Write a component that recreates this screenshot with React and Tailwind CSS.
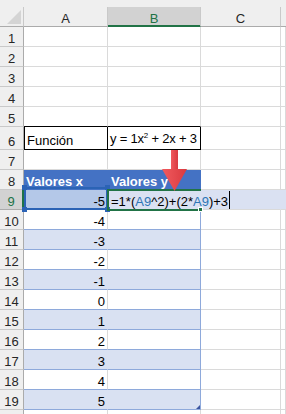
import React from "react";

const GRID = "shrink-0 border-r border-b border-[#dadada]";

function RowHead({ n, active }) {
  return active ? (
    <div className="w-[24px] shrink-0 flex items-end justify-center bg-[#d2d2d2] border-b border-b-[#ababab] border-r-2 border-r-[#217346] text-[#217346]">
      {n}
    </div>
  ) : (
    <div className="w-[24px] shrink-0 flex items-end justify-center bg-[#efefef] border-b border-b-[#c9c9c9] border-r border-r-[#ababab] text-[#262626]">
      {n}
    </div>
  );
}

function Row({ n, tall, active, children }) {
  return (
    <div className={tall ? "flex shrink-0 h-[23px]" : "flex shrink-0 h-[20px]"}>
      <RowHead n={n} active={active} />
      {children}
    </div>
  );
}

function EmptyRow({ n }) {
  return (
    <Row n={n}>
      <div className={`w-[84px] ${GRID}`} />
      <div className={`w-[93px] ${GRID}`} />
      <div className={`w-[80px] ${GRID}`} />
      <div className={`flex-1 ${GRID}`} />
    </Row>
  );
}

function DataRow({ n, value }) {
  const banded = n % 2 === 1;
  return (
    <Row n={n}>
      <div
        className={
          banded
            ? "w-[84px] shrink-0 flex items-end justify-end pr-[2px] bg-[#d9e1f2] border-r border-b border-r-[#d9e1f2] border-b-[#8ea9db]"
            : "w-[84px] shrink-0 flex items-end justify-end pr-[2px] bg-white border-r border-b border-r-[#dadada] border-b-[#8ea9db]"
        }
      >
        {value}
      </div>
      <div
        className={
          banded
            ? "w-[93px] shrink-0 bg-[#d9e1f2] border-r border-b border-[#8ea9db]"
            : "w-[93px] shrink-0 bg-white border-r border-b border-[#8ea9db]"
        }
      />
      <div className={`w-[80px] ${GRID}`} />
      <div className={`flex-1 ${GRID}`} />
    </Row>
  );
}

export default function App() {
  const rest = [-4, -3, -2, -1, 0, 1, 2, 3, 4, 5];

  return (
    <div className="relative w-[286px] h-[414px] overflow-hidden bg-white font-['Liberation_Sans',Arial,sans-serif] text-[13px] leading-[15px] text-black">
      {/* column headers */}
      <div className="flex h-[27px] bg-[#efefef] text-[#262626]">
        <div className="relative w-[24px] h-[20px] mt-[7px] shrink-0 border-r border-b border-r-[#c9c9c9] border-b-[#ababab]">
          <svg className="absolute left-[7px] top-[3px]" width="15" height="15">
            <polygon points="14,0 14,14 0,14" fill="#d4d4d4" />
          </svg>
        </div>
        <div className="w-[84px] h-[20px] mt-[7px] shrink-0 flex items-end justify-center border-r border-b border-r-[#c9c9c9] border-b-[#ababab]">
          A
        </div>
        <div className="w-[93px] h-[20px] mt-[7px] shrink-0 flex items-end justify-center bg-[#d2d2d2] text-[#217346] border-r border-b border-r-[#c9c9c9] border-b-[#217346] shadow-[inset_0_-1px_0_#217346]">
          B
        </div>
        <div className="w-[80px] h-[20px] mt-[7px] shrink-0 flex items-end justify-center border-r border-b border-r-[#c9c9c9] border-b-[#ababab]">
          C
        </div>
        <div className="flex-1 h-[20px] mt-[7px] border-b border-b-[#ababab]" />
      </div>

      {[1, 2, 3, 4].map((n) => (
        <EmptyRow key={n} n={n} />
      ))}

      <Row n={5}>
        <div className="w-[84px] shrink-0 border-r border-b border-r-[#dadada] border-b-black" />
        <div className="w-[93px] shrink-0 border-r border-b border-r-[#dadada] border-b-black" />
        <div className={`w-[80px] ${GRID}`} />
        <div className={`flex-1 ${GRID}`} />
      </Row>

      <Row n={6} tall>
        <div className="w-[84px] shrink-0 flex items-end pl-[3px] pb-px border-r border-b border-black shadow-[inset_1px_0_0_#000]">
          Función
        </div>
        <div className="w-[93px] shrink-0 flex items-end pl-[2px] pb-px border-r border-b border-black whitespace-nowrap tracking-[-0.2px]">
          <span>
            y = 1x<span className="relative -top-[5px] text-[8px]">2</span> + 2x + 3
          </span>
        </div>
        <div className={`w-[80px] ${GRID}`} />
        <div className={`flex-1 ${GRID}`} />
      </Row>

      <EmptyRow n={7} />

      <Row n={8}>
        <div className="w-[84px] shrink-0 flex items-end pl-[2px] bg-[#4472c4] text-white font-bold border-r border-b border-[#4472c4]">
          Valores x
        </div>
        <div className="w-[93px] shrink-0 flex items-end pl-[3px] bg-[#4472c4] text-white font-bold border-r border-b border-[#4472c4]">
          Valores y
        </div>
        <div className={`w-[80px] ${GRID}`} />
        <div className={`flex-1 ${GRID}`} />
      </Row>

      <Row n={9} active>
        <div className="w-[84px] shrink-0 flex items-end justify-end pr-[2px] bg-[#b4c8e8] border-r border-b border-[#8ea9db]">
          -5
        </div>
        <div className="w-[93px] shrink-0 flex items-end pl-[3px] bg-[#dae1f2] border-r border-b border-r-[#dae1f2] border-b-[#8ea9db]">
          <span className="relative z-10 whitespace-nowrap">
            =1*(<span className="text-[#2e75b6]">A9</span>^2)+(2*
            <span className="text-[#2e75b6]">A9</span>)+3
            <span className="absolute -right-[2px] bottom-0 w-px h-[18px] bg-black" />
          </span>
        </div>
        <div className="w-[80px] shrink-0 bg-[#dae1f2] border-r border-b border-r-[#dae1f2] border-b-[#dadada]" />
        <div className="flex-1 bg-[#dae1f2] border-b border-b-[#dadada]" />
      </Row>

      {rest.map((v, i) => (
        <DataRow key={i} n={i + 10} value={v} />
      ))}

      <EmptyRow n="" />

      {/* reference box around A9 */}
      <div className="absolute left-[24px] top-[187px] w-[84px] h-[23px] border-2 border-[#2b63b5]" />
      <div className="absolute left-[22px] top-[185px] w-[5px] h-[5px] bg-[#2b63b5]" />
      <div className="absolute left-[105px] top-[185px] w-[5px] h-[5px] bg-[#2b63b5]" />
      <div className="absolute left-[22px] top-[207px] w-[5px] h-[5px] bg-[#2b63b5]" />
      <div className="absolute left-[105px] top-[207px] w-[5px] h-[5px] bg-[#2b63b5]" />

      {/* active cell B9 */}
      <div className="absolute left-[107px] top-[189px] w-[94px] h-[22px] border-2 border-r-0 border-[#217346]" />
      <div className="absolute left-[198px] top-[207px] w-[5px] h-[5px] bg-[#217346] border border-white" />

      {/* table resize handle */}
      <svg className="absolute left-[196px] top-[405px]" width="4" height="4">
        <polygon points="4,0 4,4 0,4" fill="#3b55a0" />
      </svg>

      {/* red arrow */}
      <svg className="absolute left-[161px] top-[149px]" width="28" height="44">
        <defs>
          <linearGradient id="arr" x1="0" y1="0" x2="1" y2="0">
            <stop offset="0" stopColor="#f05a5e" />
            <stop offset="1" stopColor="#d93a40" />
          </linearGradient>
        </defs>
        <rect x="10" y="1" width="7" height="21" fill="url(#arr)" />
        <polygon points="1,20 26,20 13.5,42" fill="url(#arr)" />
      </svg>
    </div>
  );
}
